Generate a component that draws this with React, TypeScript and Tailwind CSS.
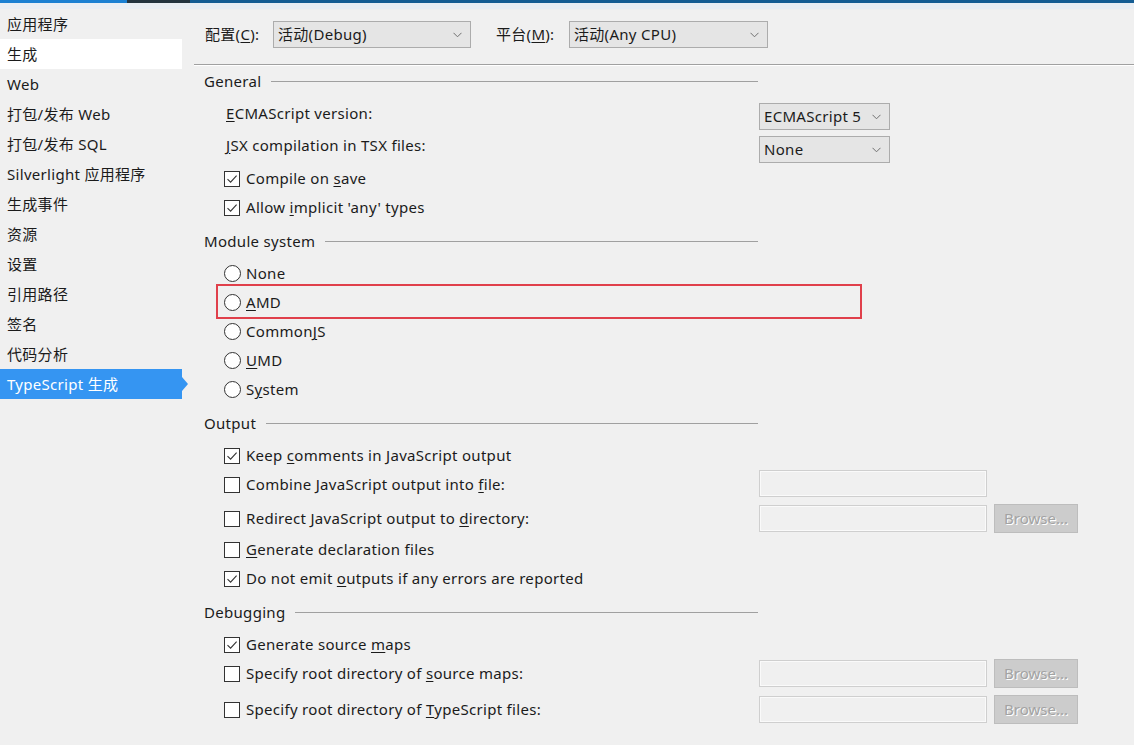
import React from "react";

const sideItems = [
  "应用程序",
  "生成",
  "Web",
  "打包/发布 Web",
  "打包/发布 SQL",
  "Silverlight 应用程序",
  "生成事件",
  "资源",
  "设置",
  "引用路径",
  "签名",
  "代码分析",
  "TypeScript 生成",
];

function Check({ checked }: { checked: boolean }) {
  return (
    <span className="flex h-4 w-4 shrink-0 items-center justify-center border border-[#333] bg-white">
      {checked && (
        <svg width="12" height="12" viewBox="0 0 12 12" fill="none">
          <path d="M1.5 6.2 L4.6 9.2 L10.6 2.6" stroke="#333" strokeWidth="1.1" />
        </svg>
      )}
    </span>
  );
}

function Radio() {
  return <span className="h-[17px] w-[17px] shrink-0 rounded-full border border-[#333] bg-white" />;
}

function Chevron() {
  return (
    <svg width="9" height="6" viewBox="0 0 9 6" fill="none" className="shrink-0">
      <path d="M0.5 0.8 L4.5 4.8 L8.5 0.8" stroke="#707070" strokeWidth="1" />
    </svg>
  );
}

function Select({ value, w }: { value: string; w: string }) {
  return (
    <div className={`flex h-[27px] items-center justify-between border border-[#acacac] bg-[#e5e5e5] pl-[4px] pr-[8px] ${w}`}>
      <span>{value}</span>
      <Chevron />
    </div>
  );
}

function Header({ label }: { label: string }) {
  return (
    <div className="flex h-5 w-[554px] items-center">
      <span>{label}</span>
      <span className="ml-[10px] flex-1 border-t border-[#a0a0a0]" />
    </div>
  );
}

function TextBox() {
  return <div className="h-[27px] w-[228px] border border-[#cfcfcf] bg-[#f0f0f0] shadow-[inset_0_0_0_1px_#fafafa]" />;
}

function Browse() {
  return (
    <div className="ml-[7px] flex h-[29px] w-[84px] items-center justify-center border border-[#bdbdbd] bg-[#cccccc] text-[#a3a3a3] tracking-normal [text-shadow:1px_1px_0_#fff]">
      Browse...
    </div>
  );
}

export default function App() {
  return (
    <div className="h-[745px] w-[1134px] overflow-hidden bg-[#f0f0f0] text-[15px] tracking-[0.3px] text-[#1b1b1b] [font-family:'Segoe_UI','Noto_Sans','Noto_Sans_CJK_SC',sans-serif]">
      <div className="flex h-[3px]">
        <div className="w-[127px] bg-[#1b80d2]" />
        <div className="w-[63px] bg-[#24343f]" />
        <div className="flex-1 bg-[#155d93]" />
      </div>
      <div className="h-[6px] bg-[#e9eef4]" />
      <div className="flex">
        <div className="w-[182px] shrink-0">
          {sideItems.map((item, i) => {
            const active = i === sideItems.length - 1;
            const sel = i === 1;
            return (
              <div
                key={item}
                className={`relative flex h-[30px] items-center pl-[7px] ${
                  active ? "bg-[#3595f2] text-white" : sel ? "bg-white" : ""
                }`}
              >
                {item}
                {active && (
                  <span className="absolute left-full top-1/2 -translate-y-1/2 border-y-[7px] border-l-[6px] border-y-transparent border-l-[#3595f2]" />
                )}
              </div>
            );
          })}
        </div>

        <div className="flex-1">
          <div className="ml-[23px] mt-[12px] flex h-[27px] items-center">
            <span className="w-[68px]">
              配置(<u className="underline-offset-2">C</u>):
            </span>
            <Select value="活动(Debug)" w="w-[198px]" />
            <span className="ml-[25px] w-[73px]">
              平台(<u className="underline-offset-2">M</u>):
            </span>
            <Select value="活动(Any CPU)" w="w-[199px]" />
          </div>
          <div className="ml-[12px] mt-[16px] border-t border-b border-t-[#a0a0a0] border-b-white" />

          <div className="ml-[22px]">
            <div className="mt-[5px]">
              <Header label="General" />
            </div>
            <div className="mt-[9px] flex h-[32px] items-start pl-[22px]">
              <span className="w-[533px] leading-[26px]">
                <u className="underline-offset-2">E</u>CMAScript version:
              </span>
              <div className="mt-[3px]">
                <Select value="ECMAScript 5" w="w-[131px]" />
              </div>
            </div>
            <div className="flex h-[30px] items-start pl-[22px]">
              <span className="w-[533px] leading-[26px]">
                <u className="underline-offset-2">J</u>SX compilation in TSX files:
              </span>
              <div className="mt-[4px]">
                <Select value="None" w="w-[131px]" />
              </div>
            </div>
            <div className="mt-[2px] flex h-[29px] items-center gap-[6px] pl-[20px]">
              <Check checked />
              <span>
                Compile on <u className="underline-offset-2">s</u>ave
              </span>
            </div>
            <div className="flex h-[29px] items-center gap-[6px] pl-[20px]">
              <Check checked />
              <span>
                Allow <u className="underline-offset-2">i</u>mplicit 'any' types
              </span>
            </div>

            <div className="mt-[9px]">
              <Header label="Module system" />
            </div>
            <div className="mt-[8px] flex h-[29px] items-center gap-[5px] pl-[20px]">
              <Radio />
              <span>None</span>
            </div>
            <div className="relative flex h-[29px] items-center gap-[5px] pl-[20px]">
              <Radio />
              <span>
                <u className="underline-offset-2">A</u>MD
              </span>
              <span className="absolute left-[12px] top-[-4px] h-[35px] w-[646px] border-2 border-[#e0404b]" />
            </div>
            <div className="flex h-[29px] items-center gap-[5px] pl-[20px]">
              <Radio />
              <span>
                Common<u className="underline-offset-2">J</u>S
              </span>
            </div>
            <div className="flex h-[29px] items-center gap-[5px] pl-[20px]">
              <Radio />
              <span>
                <u className="underline-offset-2">U</u>MD
              </span>
            </div>
            <div className="flex h-[29px] items-center gap-[5px] pl-[20px]">
              <Radio />
              <span>
                S<u className="underline-offset-2">y</u>stem
              </span>
            </div>

            <div className="mt-[9px]">
              <Header label="Output" />
            </div>
            <div className="mt-[8px] flex h-[29px] items-center gap-[6px] pl-[20px]">
              <Check checked />
              <span>
                Keep <u className="underline-offset-2">c</u>omments in JavaScript output
              </span>
            </div>
            <div className="flex h-[29px] items-center pl-[20px]">
              <div className="flex w-[535px] items-center gap-[6px]">
                <Check checked={false} />
                <span>
                  Combine JavaScript output into <u className="underline-offset-2">f</u>ile:
                </span>
              </div>
              <div className="-mt-[3px]">
                <TextBox />
              </div>
            </div>
            <div className="mt-[5px] flex h-[29px] items-center pl-[20px]">
              <div className="flex w-[535px] items-center gap-[6px]">
                <Check checked={false} />
                <span>
                  Redirect JavaScript output to <u className="underline-offset-2">d</u>irectory:
                </span>
              </div>
              <TextBox />
              <Browse />
            </div>
            <div className="mt-[2px] flex h-[29px] items-center gap-[6px] pl-[20px]">
              <Check checked={false} />
              <span>
                <u className="underline-offset-2">G</u>enerate declaration files
              </span>
            </div>
            <div className="flex h-[29px] items-center gap-[6px] pl-[20px]">
              <Check checked />
              <span>
                Do not emit <u className="underline-offset-2">o</u>utputs if any errors are reported
              </span>
            </div>

            <div className="mt-[9px]">
              <Header label="Debugging" />
            </div>
            <div className="mt-[8px] flex h-[29px] items-center gap-[6px] pl-[20px]">
              <Check checked />
              <span>
                Generate source <u className="underline-offset-2">m</u>aps
              </span>
            </div>
            <div className="flex h-[29px] items-center pl-[20px]">
              <div className="flex w-[535px] items-center gap-[6px]">
                <Check checked={false} />
                <span>
                  Specify root directory of <u className="underline-offset-2">s</u>ource maps:
                </span>
              </div>
              <TextBox />
              <Browse />
            </div>
            <div className="mt-[7px] flex h-[29px] items-center pl-[20px]">
              <div className="flex w-[535px] items-center gap-[6px]">
                <Check checked={false} />
                <span>
                  Specify root directory of <u className="underline-offset-2">T</u>ypeScript files:
                </span>
              </div>
              <TextBox />
              <Browse />
            </div>
          </div>
        </div>
      </div>
    </div>
  );
}
